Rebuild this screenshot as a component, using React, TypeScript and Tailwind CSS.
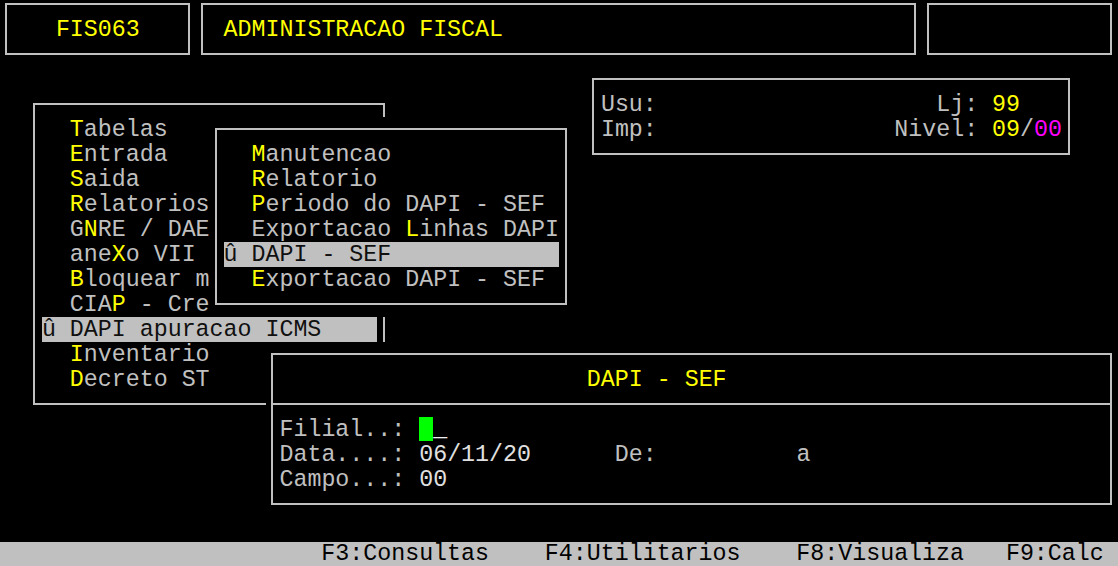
import React from 'react';

// terminal cell: 13.975px x 25px (80 cols over 1118px)

function Row({ children, className = '' }: { children?: React.ReactNode; className?: string }) {
    return <div className={`h-[25px] pt-[2px] leading-[23px] whitespace-pre ${className}`}>{children}</div>;
}

function Y({ children }: { children: React.ReactNode }) {
    return <span className="text-[#ffff00]">{children}</span>;
}

function Frame() {
    return <div className="absolute left-[5px] right-[6px] top-[11.5px] bottom-[11.5px] border-2 border-[#c0c0c0] pointer-events-none" />;
}

function Bar({ children }: { children: React.ReactNode }) {
    return <span className="inline-block align-top -mt-[2px] pt-[2px] h-[25px] w-[335.4px] bg-[#c0c0c0] text-[#101010]">{children}</span>;
}

export default function App() {
    return (
        <div className="relative h-[566px] w-[1118px] overflow-hidden bg-black font-['Liberation_Mono',monospace] text-[23.29px] text-[#c0c0c0] flex flex-col justify-end">
            {/* header */}
            <div className="absolute left-0 top-[-8.5px] w-[195.65px] h-[75px] bg-black">
                <Frame />
                <Row />
                <Row><Y>{'    FIS063'}</Y></Row>
            </div>
            <div className="absolute left-[195.65px] top-[-8.5px] w-[726.7px] h-[75px] bg-black">
                <Frame />
                <Row />
                <Row><Y>{'  ADMINISTRACAO FISCAL'}</Y></Row>
            </div>
            <div className="absolute left-[922.35px] top-[-8.5px] w-[195.65px] h-[75px] bg-black">
                <Frame />
            </div>

            {/* user info */}
            <div className="absolute left-[586.95px] top-[66.5px] w-[489.125px] h-[100px] bg-black">
                <Frame />
                <Row />
                <Row>{' Usu:                    Lj: '}<Y>99</Y></Row>
                <Row>
                    {' Imp:                 Nivel: '}
                    <Y>09</Y>/<span className="text-[#ff00ff]">00</span>
                </Row>
            </div>

            {/* main menu */}
            <div className="absolute left-[27.95px] top-[91.5px] w-[363.35px] h-[325px] bg-black">
                <Frame />
                <Row />
                <Row>{'   '}<Y>T</Y>abelas</Row>
                <Row>{'   '}<Y>E</Y>ntrada</Row>
                <Row>{'   '}<Y>S</Y>aida</Row>
                <Row>{'   '}<Y>R</Y>elatorios</Row>
                <Row>{'   G'}<Y>N</Y>{'RE / DAE'}</Row>
                <Row>{'   ane'}<Y>X</Y>{'o VII'}</Row>
                <Row>{'   '}<Y>B</Y>{'loquear m'}</Row>
                <Row>{'   CIA'}<Y>P</Y>{' - Cre'}</Row>
                <Row>{' '}<Bar>{'û DAPI apuracao ICMS'}</Bar></Row>
                <Row>{'   '}<Y>I</Y>nventario</Row>
                <Row>{'   '}<Y>D</Y>{'ecreto ST'}</Row>
            </div>

            {/* submenu */}
            <div className="absolute left-[209.625px] top-[116.5px] w-[363.35px] h-[200px] bg-black">
                <Frame />
                <Row />
                <Row>{'   '}<Y>M</Y>anutencao</Row>
                <Row>{'   '}<Y>R</Y>elatorio</Row>
                <Row>{'   '}<Y>P</Y>{'eriodo do DAPI - SEF'}</Row>
                <Row>{'   Exportacao '}<Y>L</Y>{'inhas DAPI'}</Row>
                <Row>{' '}<Bar>{'û DAPI - SEF'}</Bar></Row>
                <Row>{'   '}<Y>E</Y>{'xportacao DAPI - SEF'}</Row>
            </div>

            {/* DAPI - SEF form */}
            <div className="absolute left-[265.525px] top-[341.5px] w-[852.475px] h-[175px] bg-black">
                <Frame />
                <Row />
                <Row>{'                       '}<Y>DAPI - SEF</Y></Row>
                <div className="h-[25px] flex items-center pl-[5px] pr-[6px]">
                    <div className="h-[2px] w-full bg-[#c0c0c0]" />
                </div>
                <Row>
                    {' Filial..: '}
                    <span className="inline-block align-top -mt-[1.5px] h-[24px] w-[13.975px] bg-[#00ff00]" />
                    <span className="text-[#f0f0f0]">_</span>
                </Row>
                <Row>{' Data....: '}<span className="text-[#e0e0e0]">06/11/20</span>{'      De:          a'}</Row>
                <Row>{' Campo...: '}<span className="text-[#e0e0e0]">00</span></Row>
            </div>

            {/* function keys */}
            <div className="h-[24.5px] pt-[1.5px] leading-[23px] bg-[#c0c0c0] text-black whitespace-pre">
                {'                       F3:Consultas    F4:Utilitarios    F8:Visualiza   F9:Calc'}
            </div>
        </div>
    );
}
